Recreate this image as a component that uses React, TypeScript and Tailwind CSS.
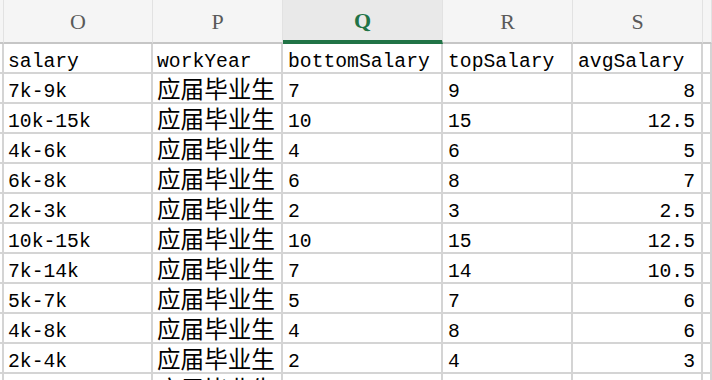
const rows: [string, string, string, string][] = [
  ["7k-9k", "7", "9", "8"],
  ["10k-15k", "10", "15", "12.5"],
  ["4k-6k", "4", "6", "5"],
  ["6k-8k", "6", "8", "7"],
  ["2k-3k", "2", "3", "2.5"],
  ["10k-15k", "10", "15", "12.5"],
  ["7k-14k", "7", "14", "10.5"],
  ["5k-7k", "5", "7", "6"],
  ["4k-8k", "4", "8", "6"],
  ["2k-4k", "2", "4", "3"],
];

// latin text sits a little low in the cell, like the sheet's default font
const mono = "font-['Liberation_Mono','Noto_Sans_CJK_SC',monospace] text-[19.7px] leading-[22px] pt-[7px]";
const cjk = "font-['Noto_Sans_CJK_SC',sans-serif] text-[23.6px] leading-[28px]";
const cell = "box-border h-[30px] border-r-2 border-b-2 border-[#d4d4d4] flex items-center whitespace-nowrap text-black";

function HeaderCell({ label, active }: { label?: string; active?: boolean }) {
  return (
    <div
      className={`box-border flex h-[44px] items-center justify-center border-r border-[#e2e2e2] font-['Liberation_Serif',serif] text-[22px] ${
        active
          ? "border-b-[4px] border-b-[#217346] bg-[#e9e9e9] font-bold text-[#217346]"
          : "border-b-2 border-b-[#c6c6c6] bg-[#f5f5f5] text-[#5a5a5a]"
      }`}
    >
      {label}
    </div>
  );
}

function Row({ cells, first }: { cells: string[]; first?: boolean }) {
  return (
    <>
      <div className={`${cell} bg-white`} />
      <div className={`${cell} pl-[4px] ${mono}`}>{cells[0]}</div>
      <div className={`${cell} pl-[4px] ${first ? mono : ""}`}>
        {first ? cells[1] : <span className={cjk}>{cells[1]}</span>}
      </div>
      <div className={`${cell} pl-[5px] ${mono}`}>{cells[2]}</div>
      <div className={`${cell} pl-[5px] ${mono}`}>{cells[3]}</div>
      <div className={`${cell} ${first ? "justify-start pl-[5px]" : "justify-end pr-[6px]"} ${mono}`}>{cells[4]}</div>
      <div className={`${cell} border-r-0`} />
    </>
  );
}

export default function App() {
  return (
    <div className="h-[380px] w-[712px] overflow-hidden bg-white">
      <div className="grid grid-cols-[4px_149px_130px_160px_130px_130px_1fr]">
        <HeaderCell />
        <HeaderCell label="O" />
        <HeaderCell label="P" />
        <HeaderCell label="Q" active />
        <HeaderCell label="R" />
        <HeaderCell label="S" />
        <HeaderCell />
        <Row first cells={["salary", "workYear", "bottomSalary", "topSalary", "avgSalary"]} />
        {rows.map((r, i) => (
          <Row key={i} cells={[r[0], "应届毕业生", r[1], r[2], r[3]]} />
        ))}
        <Row cells={["", "应届毕业生", "", "", ""]} />
      </div>
    </div>
  );
}
